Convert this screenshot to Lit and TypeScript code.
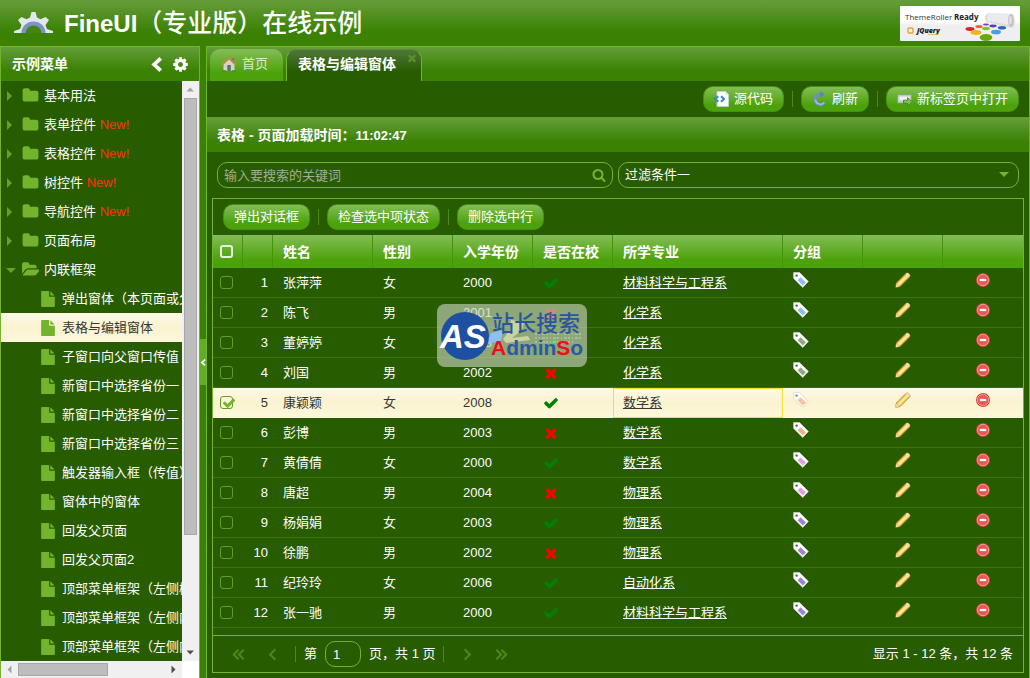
import { LitElement, html, css, svg, nothing } from "lit";
import { customElement, property, state } from "lit/decorators.js";
import { classMap } from "lit/directives/class-map.js";

const GLYPHS: Record<string, string> = {
  cog: "M1152 896q0-106-75-181t-181-75-181 75-75 181 75 181 181 75 181-75 75-181zm512-109v222q0 12-8 23t-20 13l-185 28q-19 54-39 91 35 50 107 138 10 12 10 25t-9 23q-27 37-99 108t-94 71q-12 0-26-9l-138-108q-44 23-91 38-16 136-29 186-7 28-36 28h-222q-14 0-24.5-8.5t-11.5-21.5l-28-184q-49-16-90-37l-141 107q-10 9-25 9-14 0-25-11-126-114-165-168-7-10-7-23 0-12 8-23 15-21 51-66.5t54-70.5q-27-50-41-99l-183-27q-13-2-21-12.5t-8-23.5v-222q0-12 8-23t19-13l186-28q14-46 39-92-40-57-107-138-10-12-10-24 0-10 9-23 26-36 98.5-107.5t94.5-71.5q13 0 26 10l138 107q44-23 91-38 16-136 29-186 7-28 36-28h222q14 0 24.5 8.5t11.5 21.5l28 184q49 16 90 37l142-107q9-9 24-9 13 0 25 10 129 119 165 170 7 8 7 22 0 12-8 23-15 21-51 66.5t-54 70.5q26 50 41 98l183 28q13 2 21 12.5t8 23.5z",
  check: "M1671 566q0 40-28 68l-724 724-136 136q-28 28-68 28t-68-28l-136-136-362-362q-28-28-28-68t28-68l136-136q28-28 68-28t68 28l294 295 656-657q28-28 68-28t68 28l136 136q28 28 28 68z",
  times: "M1490 1322q0 40-28 68l-136 136q-28 28-68 28t-68-28l-294-294-294 294q-28 28-68 28t-68-28l-136-136q-28-28-28-68t28-68l294-294-294-294q-28-28-28-68t28-68l136-136q28-28 68-28t68 28l294 294 294-294q28-28 68-28t68 28l136 136q28 28 28 68t-28 68l-294 294 294 294q28 28 28 68z",
  folder: "M1728 608v704q0 92-66 158t-158 66h-1216q-92 0-158-66t-66-158v-960q0-92 66-158t158-66h320q92 0 158 66t66 158v32h672q92 0 158 66t66 158z",
  open: "M1879 952q0 31-31 66l-336 396q-43 51-120.5 86.5t-143.5 35.5h-1088q-34 0-60.5-13t-26.5-43q0-31 31-66l336-396q43-51 120.5-86.5t143.5-35.5h1088q34 0 60.5 13t26.5 43zm-343-344v160h-832q-94 0-197 47.5t-164 119.5l-337 396-5 6q0-4-.5-12.5t-.5-12.5v-960q0-92 66-158t158-66h320q92 0 158 66t66 158v32h544q92 0 158 66t66 158z",
  search: "M1216 832q0-185-131.5-316.5t-316.5-131.5-316.5 131.5-131.5 316.5 131.5 316.5 316.5 131.5 316.5-131.5 131.5-316.5zm512 832q0 52-38 90t-90 38q-54 0-90-38l-343-342q-179 124-399 124-143 0-273.5-55.5t-225-150-150-225-55.5-273.5 55.5-273.5 150-225 225-150 273.5-55.5 273.5 55.5 225 150 150 225 55.5 273.5q0 220-124 399l343 343q37 37 37 90z",
  file: "M1152 512v-472q22 14 36 28l408 408q14 14 28 36h-472zm-128 32q0 40 28 68t68 28h544v1056q0 40-28 68t-68 28h-1344q-40 0-68-28t-28-68v-1600q0-40 28-68t68-28h800v544z",
};

const glyph = (name: string, size: number) =>
  html`<svg class="glyph" width=${size} height=${size} viewBox="0 0 1792 1792" aria-hidden="true"><path d=${GLYPHS[name]}></path></svg>`;

const stroke = (d: string, size: number, width: number) =>
  html`<svg class="stroke" width=${size} height=${size} viewBox="0 0 16 16" stroke-width=${width} aria-hidden="true"><path d=${d}></path></svg>`;

const pixelIcon = (body: unknown) =>
  html`<svg width="16" height="16" viewBox="0 0 16 16" aria-hidden="true">${body}</svg>`;

const tagIcon = (fill: string) => pixelIcon(svg`
  <path d="M.6.6h6l8.800 8.800-5.600 6L.6 6.400z" fill="#fdfdfd" stroke="#c9cfc6" stroke-width=".8"></path>
  <path d="M7.600 5.200l5.400 5.200-3.200 3.200-5.200-5.400z" fill=${fill}></path>
  <circle cx="3.600" cy="3.600" r="1.200" fill="#4a5a68"></circle>`);

const pencilIcon = pixelIcon(svg`
  <path d="M.8 15.200l.6-4.200L11 1.400q1.300-1 2.900.5 1.600 1.600.7 3L5 14.500z" fill="#f3c65a" stroke="#b5812a" stroke-width=".9"></path>
  <path d="M2.800 11.500l8.800-8.800 1.700 1.700-8.800 8.800z" fill="#fde88f"></path>
  <path d="M.8 15.200l.6-3.600 3 3z" fill="#f0d8a8"></path>
  <path d="M10.600 2l1.400-1q1-.3 2 .7t.8 2.100l-1.200 1.400z" fill="#f6dcae"></path>`);

const deleteIcon = pixelIcon(svg`
  <circle cx="8" cy="8" r="7" fill="#d23c36"></circle>
  <circle cx="8" cy="8" r="5.700" fill="#e65a54" stroke="#f4a29c" stroke-width=".9"></circle>
  <rect x="4.800" y="6.900" width="6.400" height="2.200" fill="#fff"></rect>`);

const homeIcon = pixelIcon(svg`
  <path d="M2.500 8.500L8 3.500l5.500 5V15h-11z" fill="#d9d3c4"></path>
  <path d="M11.300 2h2v4l-2-1.600z" fill="#9c6a4a"></path>
  <path d="M.8 8.700L8 1.800l7.200 6.900" fill="none" stroke="#b98a4c" stroke-width="1.900"></path>
  <rect x="6.300" y="9" width="3.500" height="6" fill="#5e6f79"></rect>
  <path d="M1 15h4.300M10.700 15H15" stroke="#4c8a2a" stroke-width="1.600"></path>`);

const sourceIcon = pixelIcon(svg`
  <path d="M3 .5h8.500l3 3v12H3z" fill="#fbfcfd" stroke="#c4d2dc" stroke-width=".8"></path>
  <path d="M11.500.5v3h3z" fill="#cfdde8"></path>
  <path d="M4.300 5.200L1.300 8l3 2.800M7 5.200L10 8l-3 2.800" fill="none" stroke="#3a86c8" stroke-width="2"></path>`);

const refreshIcon = pixelIcon(svg`
  <path d="M12.600 11.400A5.200 5.200 0 1 1 9.500 3.400" fill="none" stroke="#6c8fc4" stroke-width="3.400"></path>
  <path d="M12.200 11.600A5 5 0 0 1 3.500 8.600" fill="none" stroke="#a9c2e6" stroke-width="1.300"></path>
  <path d="M8.500 0l4 3.800-4.500 2.400z" fill="#5c80b8"></path>`);

const newTabIcon = pixelIcon(svg`
  <rect x=".6" y="3.800" width="14" height="8.200" fill="#c9d0cc" stroke="#8c9a90" stroke-width=".8"></rect>
  <rect x="2.500" y="5.600" width="10.200" height="3.600" fill="#eef1ee"></rect>
  <path d="M6.500 9.200h4V6.600l5 4.300-5 4.200v-2.800h-4z" fill="#7fc05a" stroke="#3f7a24" stroke-width=".8"></path>`);

interface TreeNode {
  text: string;
  fresh?: boolean;
  expanded?: boolean;
  leaf?: boolean;
}

const TREE: TreeNode[] = [
  { text: "基本用法" },
  { text: "表单控件", fresh: true },
  { text: "表格控件", fresh: true },
  { text: "树控件", fresh: true },
  { text: "导航控件", fresh: true },
  { text: "页面布局" },
  { text: "内联框架", expanded: true },
  { text: "弹出窗体（本页面或父页面）", leaf: true },
  { text: "表格与编辑窗体", leaf: true },
  { text: "子窗口向父窗口传值", leaf: true },
  { text: "新窗口中选择省份一", leaf: true },
  { text: "新窗口中选择省份二", leaf: true },
  { text: "新窗口中选择省份三", leaf: true },
  { text: "触发器输入框（传值）", leaf: true },
  { text: "窗体中的窗体", leaf: true },
  { text: "回发父页面", leaf: true },
  { text: "回发父页面2", leaf: true },
  { text: "顶部菜单框架（左侧树）", leaf: true },
  { text: "顶部菜单框架（左侧内联）", leaf: true },
  { text: "顶部菜单框架（左侧内联二）", leaf: true },
];

type Student = [name: string, gender: string, year: number, enrolled: boolean, major: string, tag: string];

const BLUE = "#8fbdf0";
const GREEN = "#93a88a";
const ORANGE = "#f3b08c";
const PINK = "#dfa0e2";
const PURPLE = "#9a86d4";

const STUDENTS: Student[] = [
  ["张萍萍", "女", 2000, true, "材料科学与工程系", BLUE],
  ["陈飞", "男", 2001, false, "化学系", BLUE],
  ["董婷婷", "女", 2008, true, "化学系", GREEN],
  ["刘国", "男", 2002, false, "化学系", GREEN],
  ["康颖颖", "女", 2008, true, "数学系", ORANGE],
  ["彭博", "男", 2003, false, "数学系", ORANGE],
  ["黄倩倩", "女", 2000, true, "数学系", PINK],
  ["唐超", "男", 2004, false, "物理系", PINK],
  ["杨娟娟", "女", 2003, true, "物理系", PURPLE],
  ["徐鹏", "男", 2002, false, "物理系", PURPLE],
  ["纪玲玲", "女", 2006, true, "自动化系", PURPLE],
  ["张一驰", "男", 2000, true, "材料科学与工程系", PURPLE],
];

const shared = css`
  * {
    box-sizing: border-box;
  }
  :host {
    --line: #72b42d;
    --deep: #285c00;
    --bar: linear-gradient(#659d3a, #3a8104 70%);
    --raised: linear-gradient(#83bd57, #4ca20b 75%);
    --cream: linear-gradient(#fcf9e6, #faf3cf 50%, #fdf8dc);
  }
  button,
  input,
  select {
    font: inherit;
    color: inherit;
    margin: 0;
  }
  button {
    background: none;
    border: 0;
    padding: 0;
    display: inline-flex;
    align-items: center;
    justify-content: center;
    cursor: pointer;
  }
  a {
    color: inherit;
  }
  svg {
    display: block;
    flex: none;
  }
  .glyph {
    fill: currentColor;
  }
  .stroke {
    fill: none;
    stroke: currentColor;
  }
  .btn {
    height: 26px;
    padding: 0 10px;
    gap: 4px;
    border: 1px solid #45930b;
    border-radius: 10px;
    background: var(--raised);
    white-space: nowrap;
  }
  .sep {
    width: 1px;
    height: 16px;
    background: #4b8a1c;
  }
  .toolbar {
    display: flex;
    align-items: center;
    gap: 8px;
    padding: 5px 10px;
  }
`;

@customElement("example-menu")
export class ExampleMenu extends LitElement {
  @state() private current = "表格与编辑窗体";

  static styles = [
    shared,
    css`
      :host {
        display: flex;
        flex-direction: column;
        min-height: 0;
        border: 1px solid var(--line);
        border-bottom: 0;
        background: var(--deep);
      }
      .head {
        height: 34px;
        display: flex;
        align-items: center;
        padding: 0 10px 0 11px;
        background: var(--bar);
        gap: 8px;
      }
      .head h2 {
        margin: 0;
        flex: 1;
        font-size: 14px;
        line-height: 20px;
      }
      .body {
        flex: 1;
        min-height: 0;
        display: grid;
        grid-template: minmax(0, 1fr) 17px / minmax(0, 1fr) 17px;
      }
      ul {
        list-style: none;
        margin: 0;
        padding: 0;
        overflow: hidden;
      }
      .node {
        display: flex;
        align-items: center;
        height: 29px;
        padding-left: 5px;
        color: var(--line);
        text-decoration: none;
        white-space: nowrap;
      }
      .arrow {
        flex: none;
        width: 16px;
      }
      .icon {
        flex: none;
        width: 22px;
      }
      .leaf {
        padding-left: 39px;
      }
      .label {
        color: #fff;
      }
      .fresh {
        color: #f30;
      }
      .current {
        background: var(--cream);
      }
      .current .label {
        color: #363636;
      }
      .track {
        display: flex;
        background: #f0f0f0;
        color: #505050;
      }
      .vertical {
        flex-direction: column;
      }
      .end {
        flex: none;
        width: 17px;
        height: 17px;
      }
      .off {
        color: #a3a3a3;
      }
      .thumb {
        background: #bdbdbd;
        border: 1px solid #a8a8a8;
      }
      .vertical .thumb {
        margin: 0 2px;
        flex: 0 1 437px;
      }
      .vertical .rest {
        flex: 1 0 109px;
      }
      .horizontal .thumb {
        margin: 2px 0;
        flex: 0 0 90px;
      }
      .rest {
        flex: 1;
      }
      .corner {
        background: #fff;
      }
    `,
  ];

  private arrow(d: string, off = false) {
    return html`<svg class=${classMap({ end: true, off })} viewBox="0 0 17 17" fill="currentColor"><path d=${d}></path></svg>`;
  }

  private node(n: TreeNode) {
    const icon = n.leaf ? glyph("file", 16) : glyph(n.expanded ? "open" : "folder", 17);
    return html`<li>
      <a
        href="#"
        class=${classMap({ node: true, leaf: !!n.leaf, current: n.text === this.current })}
        @click=${(e: Event) => {
          e.preventDefault();
          if (n.leaf) this.current = n.text;
        }}
      >
        ${n.leaf
          ? nothing
          : html`<span class="arrow"
              ><svg width="10" height="10" viewBox="0 0 10 10" fill="currentColor" opacity=".8">
                <path d=${n.expanded ? "M0 3h10L5 8z" : "M1 0l5 5-5 5z"}></path></svg
            ></span>`}
        <span class="icon">${icon}</span>
        <span class="label">${n.text}${n.fresh ? html` <span class="fresh">New!</span>` : nothing}</span>
      </a>
    </li>`;
  }

  render() {
    return html`
      <div class="head">
        <h2>示例菜单</h2>
        <button aria-label="折叠菜单">${stroke("M12.500 1.500L5.500 8l7 6.500", 15, 4)}</button>
        <button aria-label="设置">${glyph("cog", 17)}</button>
      </div>
      <div class="body">
        <ul>
          ${TREE.map((n) => this.node(n))}
        </ul>
        <div class="track vertical">
          ${this.arrow("M4.500 10.500h7.500L8.200 6.500z", true)}
          <div class="thumb"></div>
          <div class="rest"></div>
          ${this.arrow("M4.500 6.500h7.500L8.200 10.500z")}
        </div>
        <div class="track horizontal">
          ${this.arrow("M10.500 4.500v8L6.500 8.500z", true)}
          <div class="thumb"></div>
          <div class="rest"></div>
          ${this.arrow("M6.500 4.500v8l4-4z")}
        </div>
        <div class="corner"></div>
      </div>
    `;
  }
}

@customElement("student-grid")
export class StudentGrid extends LitElement {
  @property({ attribute: false }) students: Student[] = [];
  @state() private selected = new Set<number>([4]);

  static styles = [
    shared,
    css`
      :host {
        display: flex;
        flex-direction: column;
        flex: 1;
        min-height: 0;
        border: 1px solid var(--line);
      }
      .body {
        flex: 1;
        min-height: 0;
        overflow: hidden;
      }
      table {
        width: 100%;
        table-layout: fixed;
        border-collapse: separate;
        border-spacing: 0;
      }
      .narrow {
        width: 30px;
      }
      .name {
        width: 100px;
      }
      .short {
        width: 80px;
      }
      th,
      td {
        padding: 0 10px;
        text-align: left;
        white-space: nowrap;
      }
      thead tr {
        background: var(--raised);
      }
      th {
        height: 33px;
        font-size: 14px;
        border-right: 1px solid #45930b;
      }
      th:last-child {
        border-right: 0;
      }
      td {
        height: 30px;
        border-bottom: 1px solid #3b7510;
      }
      .pick {
        padding: 0 0 0 7px;
      }
      .num {
        padding: 0 5px 0 0;
        text-align: right;
      }
      .action {
        padding: 0;
        text-align: center;
      }
      .picked td {
        background: var(--cream);
        color: #363636;
        border-bottom-color: #fdf8dc;
      }
      .picked .focus {
        padding: 0 9px;
        border: 1px solid #f9dd34;
      }
      td.yes,
      .picked td.yes {
        color: #008000;
      }
      td.no,
      .picked td.no {
        color: #f00;
      }
      .group {
        display: inline-flex;
      }
      .picked .group {
        opacity: 0.7;
      }
      .box {
        display: block;
        appearance: none;
        width: 13px;
        height: 13px;
        border: 1px solid #5f9f25;
        border-radius: 3px;
      }
      th .box {
        border: 2px solid #e6f3da;
      }
      .tick {
        display: grid;
        width: 17px;
        color: var(--line);
      }
      .tick > * {
        grid-area: 1 / 1;
      }
      .tick .glyph {
        margin-left: 2px;
        pointer-events: none;
      }
      .foot {
        border-top: 1px solid var(--line);
      }
      .pager {
        display: flex;
        gap: 4px;
        color: var(--line);
        opacity: 0.5;
      }
      .pager button {
        width: 30px;
        height: 26px;
      }
      .page {
        display: flex;
        align-items: center;
        gap: 8px;
      }
      .page input {
        width: 36px;
        height: 26px;
        padding: 0 7px;
        border: 1px solid var(--line);
        border-radius: 10px;
        background: none;
      }
      .total {
        margin-left: auto;
      }
    `,
  ];

  private toggle(i: number) {
    const next = new Set(this.selected);
    if (!next.delete(i)) next.add(i);
    this.selected = next;
  }

  private row([name, gender, year, enrolled, major, tag]: Student, i: number) {
    const on = this.selected.has(i);
    return html`<tr class=${classMap({ picked: on })}>
      <td class="pick">
        <span class="tick">
          <input class="box" type="checkbox" aria-label="选择${name}" .checked=${on} @change=${() => this.toggle(i)} />
          ${on ? glyph("check", 14) : nothing}
        </span>
      </td>
      <td class="num">${i + 1}</td>
      <td>${name}</td>
      <td>${gender}</td>
      <td>${year}</td>
      <td class=${enrolled ? "yes" : "no"}>${glyph(enrolled ? "check" : "times", 16)}</td>
      <td class=${classMap({ focus: on })}><a href="#">${major}</a></td>
      <td><span class="group">${tagIcon(tag)}</span></td>
      <td class="action"><button aria-label="编辑${name}">${pencilIcon}</button></td>
      <td class="action"><button aria-label="删除${name}">${deleteIcon}</button></td>
    </tr>`;
  }

  render() {
    return html`
      <div class="toolbar">
        <button class="btn">弹出对话框</button><span class="sep"></span>
        <button class="btn">检查选中项状态</button><span class="sep"></span>
        <button class="btn">删除选中行</button>
      </div>
      <div class="body">
        <table>
          <colgroup>
            <col class="narrow" /><col class="narrow" /><col class="name" /><col class="short" /><col class="short" />
            <col class="short" /><col /><col class="short" /><col class="short" /><col class="short" />
          </colgroup>
          <thead>
            <tr>
              <th class="pick"><input class="box" type="checkbox" aria-label="全选" /></th>
              <th></th>
              <th>姓名</th>
              <th>性别</th>
              <th>入学年份</th>
              <th>是否在校</th>
              <th>所学专业</th>
              <th>分组</th>
              <th></th>
              <th></th>
            </tr>
          </thead>
          <tbody>
            ${this.students.map((s, i) => this.row(s, i))}
          </tbody>
        </table>
      </div>
      <div class="toolbar foot">
        <div class="pager">
          <button aria-label="第一页">${stroke("M8 3L3 8l5 5M13.500 3l-5 5 5 5", 15, 2.2)}</button>
          <button aria-label="上一页">${stroke("M11 2.500L5.500 8l5.500 5.500", 15, 2.2)}</button>
        </div>
        <span class="sep"></span>
        <label class="page">第 <input type="text" value="1" aria-label="页码" /> <span>页，共 1 页</span></label>
        <span class="sep"></span>
        <div class="pager">
          <button aria-label="下一页">${stroke("M5 2.500L10.500 8 5 13.500", 15, 2.2)}</button>
          <button aria-label="最后一页">${stroke("M2.500 3l5 5-5 5M8 3l5 5-5 5", 15, 2.2)}</button>
        </div>
        <span class="total">显示 1 - 12 条，共 12 条</span>
      </div>
    `;
  }
}

@customElement("app-root")
export class AppRoot extends LitElement {
  static styles = [
    shared,
    css`
      :host {
        display: flex;
        flex-direction: column;
        height: 100vh;
        position: relative;
        overflow: hidden;
        background: #3a8104;
        color: #fff;
        font: 13px/18px "Liberation Sans", "Noto Sans CJK SC", sans-serif;
      }
      header {
        display: flex;
        align-items: center;
        height: 46px;
        padding: 0 10px 0 13px;
        background: var(--bar);
      }
      h1 {
        flex: 1;
        margin: 0 0 0 10px;
        font-size: 24px;
        line-height: 30px;
      }
      .zh {
        font-size: 25px;
        font-weight: 500;
      }
      .work {
        flex: 1;
        min-height: 0;
        display: grid;
        grid-template-columns: 200px 6px minmax(0, 1fr);
        grid-template-rows: minmax(0, 1fr);
      }
      .splitter {
        display: flex;
        align-items: center;
      }
      .splitter button {
        width: 6px;
        height: 46px;
        background: #5fae24;
      }
      main {
        display: flex;
        flex-direction: column;
        min-height: 0;
        border: 1px solid var(--line);
        border-bottom: 0;
        background: var(--deep);
      }
      .tabs {
        display: flex;
        align-items: flex-end;
        height: 34px;
        padding-left: 3px;
        gap: 3px;
        background: var(--bar);
      }
      .tab {
        height: 32px;
        border-radius: 10px 10px 0 0;
      }
      .home {
        padding: 0 15px 2px 11px;
        gap: 5px;
        background: var(--raised);
        color: #d9ecc8;
      }
      .active {
        display: flex;
        align-items: center;
        border: 1px solid var(--line);
        border-bottom: 0;
        border-top-color: #5c8a3c;
        padding: 0 3px 4px 11px;
        gap: 10px;
        background: linear-gradient(#50763a, #285c00 70%);
      }
      .active strong {
        font-size: 14px;
      }
      .close {
        align-self: flex-start;
        padding-top: 2px;
        color: #568f2b;
      }
      .right {
        justify-content: flex-end;
      }
      .title {
        height: 35px;
        display: flex;
        align-items: center;
        margin: 0;
        padding: 0 10px;
        border-top: 1px solid #5d9f27;
        background: var(--bar);
        font-size: 13px;
      }
      .title .cjk {
        font-size: 14px;
      }
      .content {
        flex: 1;
        min-height: 0;
        display: flex;
        flex-direction: column;
        padding: 0 5px 5px;
      }
      .form {
        display: grid;
        grid-template-columns: 1fr 1fr;
        padding: 10px 5px;
      }
      .search {
        margin-right: 5px;
      }
      .field {
        display: flex;
        align-items: center;
        height: 26px;
        border: 1px solid var(--line);
        border-radius: 10px;
        color: var(--line);
      }
      .field input,
      .field select {
        flex: 1;
        width: 100%;
        min-width: 0;
        height: 24px;
        padding: 0 6px;
        border: 0;
        outline: 0;
        appearance: none;
        background: none;
        color: #fff;
      }
      .field input::placeholder {
        color: #a1ad96;
        opacity: 1;
      }
      .field button {
        width: 26px;
      }
      .pick-one {
        display: grid;
        grid-template-columns: 1fr 28px;
      }
      .pick-one select {
        grid-area: 1 / 1 / 2 / 3;
      }
      .pick-one svg {
        grid-area: 1 / 2;
        justify-self: center;
        pointer-events: none;
      }
      .watermark {
        position: absolute;
        left: 437px;
        top: 304px;
        pointer-events: none;
      }
    `,
  ];

  private badge() {
    return html`<svg width="120" height="35" viewBox="0 0 120 35" role="img" aria-label="ThemeRoller Ready">
      <defs>
        <linearGradient id="paper" x2="0" y2="1">
          <stop offset=".45" stop-color="#fff"></stop>
          <stop offset=".55" stop-color="#efefef"></stop>
        </linearGradient>
      </defs>
      <rect width="120" height="35" rx="1" fill="url(#paper)"></rect>
      <path d="M88 7q-5 3-2 9l26 6q5-4 1-14z" fill="#dcdcde"></path>
      <path d="M88 7l23 1q3 6 0 11l-24-4z" fill="#ebebed"></path>
      <ellipse cx="111" cy="14.500" rx="3" ry="6.500" fill="#c4c4c8"></ellipse>
      <ellipse cx="110.500" cy="14" rx="1.500" ry="4" fill="#dedee0"></ellipse>
      <text x="5" y="14" font-family="Open Sans" font-size="8" fill="#333">ThemeRoller</text>
      <text x="54" y="14" font-family="Open Sans" font-size="8" font-weight="700" fill="#222">Ready</text>
      <rect x="8" y="22" width="5" height="5" rx="1" fill="none" stroke="#e8a33c" stroke-width="1.400"></rect>
      <text x="17" y="27" font-family="Open Sans" font-size="7" font-weight="800" font-style="italic" fill="#222">jQuery</text>
      <path d="M28 28.500h11" stroke="#eab066" stroke-width=".8"></path>
      <ellipse cx="70" cy="23" rx="4.500" ry="1.900" fill="#d8232a"></ellipse>
      <ellipse cx="79" cy="20.500" rx="3.600" ry="1.500" fill="#e8622e"></ellipse>
      <ellipse cx="86" cy="18.500" rx="3" ry="1.100" fill="#7b3fae"></ellipse>
      <ellipse cx="93" cy="20" rx="3.600" ry="1.400" fill="#4a45b0"></ellipse>
      <ellipse cx="102" cy="21.800" rx="4.200" ry="1.800" fill="#2f62c4"></ellipse>
      <ellipse cx="86" cy="22.500" rx="4" ry="1.700" fill="#86c03a"></ellipse>
      <ellipse cx="76" cy="26.500" rx="5.500" ry="2.500" fill="#f2b31c"></ellipse>
      <ellipse cx="96" cy="26" rx="5" ry="2.300" fill="#4a9fe0"></ellipse>
      <ellipse cx="86" cy="31.500" rx="6.300" ry="3.400" fill="#6aa80c"></ellipse>
    </svg>`;
  }

  private watermark() {
    return html`<svg class="watermark" width="150" height="64" viewBox="0 0 150 64" role="img" aria-label="站长搜索 AdminSo">
      <rect width="150" height="63" rx="8" fill="#c3d0b8" fill-opacity=".65"></rect>
      <path d="M54 29l12-3-2 11-14 3z" fill="#8cc0f0"></path>
      <path d="M74 16l13 2-2 8-10 8 16-2 2 4-24 3-3-4 7-9z" fill="#e6e6b4" opacity=".7"></path>
      <path d="M98 30h46M98 34h46M98 38h40" stroke="#fff" stroke-dasharray="2 2 1 2 3 1" opacity=".5"></path>
      <circle cx="28" cy="32" r="24" fill="#1e50a2"></circle>
      <text x="3" y="44" font-family="Liberation Sans" font-size="33" font-weight="700" font-style="italic" fill="#fff">AS</text>
      <text x="55" y="27" font-family="Noto Sans CJK SC" font-size="22" font-weight="500" fill="#2a559f">站长搜索</text>
      <text x="54" y="51" font-family="Liberation Sans" font-size="21" font-weight="700" fill="#2a5aa0"
        ><tspan fill="#f20c18">A</tspan>dmin<tspan fill="#f20c18">S</tspan>o</text
      >
    </svg>`;
  }

  render() {
    return html`
      <header>
        <svg width="41" height="22" viewBox="0 0 41 22" aria-hidden="true">
          <path
            d="M1 21v-2l6-2 1.500-4L5 8l3.500-3 5 2.200 3.500-1.700L18.500 0h4L24 5.500l3.500 1.700 5-2.200L36 8l-3.500 5 1.500 4 6 2v2z"
            fill="#e4e6ee"
          ></path>
          <path d="M8.500 21a12 11.500 0 0 1 24 0z" fill="#7d93c8"></path>
          <path d="M12.500 21a8 7.500 0 0 1 16 0z" fill="#45850f"></path>
        </svg>
        <h1>FineUI<span class="zh">（专业版）在线示例</span></h1>
        ${this.badge()}
      </header>
      <div class="work">
        <example-menu></example-menu>
        <div class="splitter">
          <button aria-label="折叠侧栏">${stroke("M11 3L5 8l6 5", 9, 3)}</button>
        </div>
        <main>
          <div class="tabs">
            <button class="tab home">${homeIcon}首页</button>
            <div class="tab active">
              <strong>表格与编辑窗体</strong>
              <button class="close" aria-label="关闭">${glyph("times", 12)}</button>
            </div>
          </div>
          <div class="toolbar right">
            <button class="btn">${sourceIcon}源代码</button><span class="sep"></span>
            <button class="btn">${refreshIcon}刷新</button><span class="sep"></span>
            <button class="btn">${newTabIcon}新标签页中打开</button>
          </div>
          <h2 class="title"><span><span class="cjk">表格 - 页面加载时间：</span>11:02:47</span></h2>
          <div class="content">
            <div class="form">
              <div class="field search">
                <input type="text" placeholder="输入要搜索的关键词" aria-label="搜索" />
                <button aria-label="搜索">${glyph("search", 14)}</button>
              </div>
              <div class="field pick-one">
                <select aria-label="过滤条件">
                  <option>过滤条件一</option>
                  <option>过滤条件二</option>
                </select>
                <svg width="10" height="6" viewBox="0 0 10 6" fill="currentColor"><path d="M0 0h10L5 5z"></path></svg>
              </div>
            </div>
            <student-grid .students=${STUDENTS}></student-grid>
          </div>
        </main>
      </div>
      ${this.watermark()}
    `;
  }
}
